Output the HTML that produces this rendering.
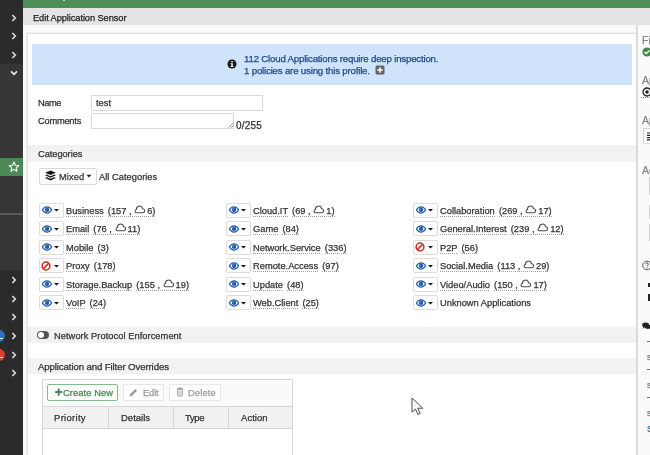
<!DOCTYPE html>
<html><head><meta charset="utf-8"><style>*{box-sizing:border-box;margin:0;padding:0}
html,body{width:650px;height:455px;overflow:hidden;background:#fff;position:relative}
body{font-family:"Liberation Sans",sans-serif;font-size:9.3px;color:#333}
.t{-webkit-text-stroke:0.25px currentColor;will-change:transform}
.a{position:absolute}
svg.a{display:block}
.t{position:absolute;white-space:nowrap;line-height:12px}
.ct{font-size:9.3px;color:#333}
.u{background-image:linear-gradient(to right,#a0a0a0 50%,rgba(255,255,255,0) 50%);background-size:2px 1px;background-repeat:repeat-x;background-position:0 100%;padding-bottom:0.7px}
</style></head><body>
<div class="a" style="left:0;top:0;width:23px;height:455px;background:#2b2b2b"></div>
<div class="a" style="left:0;top:64px;width:23px;height:206px;background:#363636"></div>
<div class="a" style="left:0;top:158px;width:23px;height:18px;background:#4c8a55"></div>
<div class="a" style="left:0;top:213px;width:23px;height:2px;background:#5a5a5a"></div>
<svg class="a" style="left:10px;top:12.600000000000001px" width="8" height="10" viewBox="0 0 8 10"><path d="M2.3 2 L5.3 5 L2.3 8" fill="none" stroke="#d8d8d8" stroke-width="1.7" stroke-linecap="butt" stroke-linejoin="miter"/></svg>
<svg class="a" style="left:10px;top:31px" width="8" height="10" viewBox="0 0 8 10"><path d="M2.3 2 L5.3 5 L2.3 8" fill="none" stroke="#d8d8d8" stroke-width="1.7" stroke-linecap="butt" stroke-linejoin="miter"/></svg>
<svg class="a" style="left:10px;top:49.5px" width="8" height="10" viewBox="0 0 8 10"><path d="M2.3 2 L5.3 5 L2.3 8" fill="none" stroke="#d8d8d8" stroke-width="1.7" stroke-linecap="butt" stroke-linejoin="miter"/></svg>
<svg class="a" style="left:9px;top:69px" width="10" height="8" viewBox="0 0 10 8"><path d="M2 2.3 L5 5.3 L8 2.3" fill="none" stroke="#e8e8e8" stroke-width="1.7" stroke-linecap="butt" stroke-linejoin="miter"/></svg>
<svg class="a" style="left:8px;top:161px" width="12" height="12" viewBox="0 0 12 12"><path d="M6 1 L7.4 4.2 L10.8 4.5 L8.2 6.8 L9 10.2 L6 8.4 L3 10.2 L3.8 6.8 L1.2 4.5 L4.6 4.2 Z" fill="none" stroke="#fff" stroke-width="1.1" stroke-linejoin="round"/></svg>
<svg class="a" style="left:10px;top:275px" width="8" height="10" viewBox="0 0 8 10"><path d="M2.3 2 L5.3 5 L2.3 8" fill="none" stroke="#d8d8d8" stroke-width="1.7" stroke-linecap="butt" stroke-linejoin="miter"/></svg>
<svg class="a" style="left:10px;top:293.5px" width="8" height="10" viewBox="0 0 8 10"><path d="M2.3 2 L5.3 5 L2.3 8" fill="none" stroke="#d8d8d8" stroke-width="1.7" stroke-linecap="butt" stroke-linejoin="miter"/></svg>
<svg class="a" style="left:10px;top:312px" width="8" height="10" viewBox="0 0 8 10"><path d="M2.3 2 L5.3 5 L2.3 8" fill="none" stroke="#d8d8d8" stroke-width="1.7" stroke-linecap="butt" stroke-linejoin="miter"/></svg>
<svg class="a" style="left:10px;top:330.5px" width="8" height="10" viewBox="0 0 8 10"><path d="M2.3 2 L5.3 5 L2.3 8" fill="none" stroke="#d8d8d8" stroke-width="1.7" stroke-linecap="butt" stroke-linejoin="miter"/></svg>
<svg class="a" style="left:10px;top:349.5px" width="8" height="10" viewBox="0 0 8 10"><path d="M2.3 2 L5.3 5 L2.3 8" fill="none" stroke="#d8d8d8" stroke-width="1.7" stroke-linecap="butt" stroke-linejoin="miter"/></svg>
<svg class="a" style="left:10px;top:368px" width="8" height="10" viewBox="0 0 8 10"><path d="M2.3 2 L5.3 5 L2.3 8" fill="none" stroke="#d8d8d8" stroke-width="1.7" stroke-linecap="butt" stroke-linejoin="miter"/></svg>
<div class="a" style="left:-7px;top:329.8px;width:12px;height:12px;border-radius:50%;background:#3071b9"></div>
<div class="a" style="left:-7px;top:348.7px;width:12px;height:12px;border-radius:50%;background:#d8432f"></div>
<div class="a" style="left:0px;top:337.8px;width:2.5px;height:1.2px;background:#eee"></div>
<div class="a" style="left:0px;top:357px;width:2.5px;height:1.2px;background:#eee"></div>
<div class="a" style="left:23px;top:0;width:627px;height:8px;background:#4e8e58"></div>
<div class="a" style="left:63px;top:0;width:1.5px;height:1px;background:#c8dccb"></div>
<div class="a" style="left:23px;top:8px;width:627px;height:17px;background:#e4e4e4"></div>
<div class="a" style="left:23px;top:25px;width:614px;height:430px;background:#f9f9f9"></div>
<div class="a" style="left:27px;top:33px;width:610px;height:430px;background:#fff;border:1px solid #e2e2e2;box-shadow:0 0 2px rgba(0,0,0,.12)"></div>
<div class="a" style="left:637px;top:25px;width:13px;height:430px;background:#fafafa"></div>
<div class="a" style="left:636px;top:25px;width:2px;height:430px;background:#dcdcdc"></div>
<div class="a" style="left:32px;top:44px;width:600px;height:41px;background:#cfe3fb"></div>
<svg class="a" style="left:227px;top:59px" width="10" height="10" viewBox="0 0 10 10"><circle cx="5" cy="5" r="4.5" fill="#1a1a1a"/><rect x="4.3" y="2" width="1.5" height="1.4" fill="#fff"/><path d="M3.6 4.2 H5.8 V7.2 H6.5 V8 H3.6 V7.2 H4.3 V5 H3.6 Z" fill="#fff"/></svg>
<svg class="a" style="left:374.5px;top:65px" width="10" height="10" viewBox="0 0 10 10"><rect x="0.5" y="0.5" width="9" height="9" rx="1.5" fill="#646464"/><path d="M5 2.3 V7.7 M2.3 5 H7.7" stroke="#fff" stroke-width="1.5"/></svg>
<div class="a" style="left:91px;top:95px;width:171.5px;height:16px;border:1px solid #d9d9d9;background:#fff"></div>
<div class="a" style="left:91px;top:113px;width:143px;height:16px;border:1px solid #d9d9d9;background:#fff"></div>
<svg class="a" style="left:227.5px;top:122px" width="6" height="6" viewBox="0 0 6 6"><path d="M5.8 0.5 L0.5 5.8 M5.8 3.2 L3.2 5.8" stroke="#777" stroke-width="0.8"/></svg>
<div class="a" style="left:28px;top:145px;width:608px;height:17px;background:#f2f2f2"></div>
<div class="a" style="left:39px;top:168px;width:58px;height:17px;border:1px solid #d9d9d9;border-radius:2px;background:#fff"></div>
<svg class="a" style="left:44.5px;top:170px" width="11" height="11" viewBox="0 0 11 11"><path d="M0.1 2.7 L5.5 0.6 L10.9 2.7 L5.5 4.9 Z" fill="#151515"/><path d="M0.1 5.3 L1.7 4.6 L5.5 6.2 L9.3 4.6 L10.9 5.3 L5.5 7.7 Z" fill="#151515"/><path d="M0.1 7.9 L1.7 7.2 L5.5 8.8 L9.3 7.2 L10.9 7.9 L5.5 10.4 Z" fill="#151515"/></svg>
<svg class="a" style="left:86px;top:174px" width="6" height="4" viewBox="0 0 6 4"><path d="M0.5 0.8 H5.5 L3 3.5 Z" fill="#222"/></svg>
<div class="a" style="left:39.0px;top:202.7px;width:24.5px;height:15px;border:1px solid #dcdcdc;border-radius:2px;background:#fff"></div>
<svg class="a" style="left:40.8px;top:206.3px" width="12" height="8" viewBox="0 0 12 8"><path d="M0.7 4 C2.3 1.3 4.1 0.3 6 0.3 C7.9 0.3 9.7 1.3 11.3 4 C9.7 6.7 7.9 7.7 6 7.7 C4.1 7.7 2.3 6.7 0.7 4 Z" fill="#1f58a3"/><path d="M2.1 4 C3.3 2.3 4.6 1.6 6 1.6 C7.4 1.6 8.7 2.3 9.9 4 C8.7 5.7 7.4 6.4 6 6.4 C4.6 6.4 3.3 5.7 2.1 4 Z" fill="#fff"/><circle cx="6" cy="3.8" r="2.2" fill="#1f58a3"/><circle cx="5.1" cy="3" r="0.7" fill="#7a9fd0"/></svg>
<svg class="a" style="left:54.2px;top:209.2px" width="5" height="3" viewBox="0 0 5 3"><path d="M0 0 H5 L2.5 2.6 Z" fill="#111"/></svg>
<div class="a" style="left:39.0px;top:221.2px;width:24.5px;height:15px;border:1px solid #dcdcdc;border-radius:2px;background:#fff"></div>
<svg class="a" style="left:40.8px;top:224.8px" width="12" height="8" viewBox="0 0 12 8"><path d="M0.7 4 C2.3 1.3 4.1 0.3 6 0.3 C7.9 0.3 9.7 1.3 11.3 4 C9.7 6.7 7.9 7.7 6 7.7 C4.1 7.7 2.3 6.7 0.7 4 Z" fill="#1f58a3"/><path d="M2.1 4 C3.3 2.3 4.6 1.6 6 1.6 C7.4 1.6 8.7 2.3 9.9 4 C8.7 5.7 7.4 6.4 6 6.4 C4.6 6.4 3.3 5.7 2.1 4 Z" fill="#fff"/><circle cx="6" cy="3.8" r="2.2" fill="#1f58a3"/><circle cx="5.1" cy="3" r="0.7" fill="#7a9fd0"/></svg>
<svg class="a" style="left:54.2px;top:227.7px" width="5" height="3" viewBox="0 0 5 3"><path d="M0 0 H5 L2.5 2.6 Z" fill="#111"/></svg>
<div class="a" style="left:39.0px;top:239.7px;width:24.5px;height:15px;border:1px solid #dcdcdc;border-radius:2px;background:#fff"></div>
<svg class="a" style="left:40.8px;top:243.3px" width="12" height="8" viewBox="0 0 12 8"><path d="M0.7 4 C2.3 1.3 4.1 0.3 6 0.3 C7.9 0.3 9.7 1.3 11.3 4 C9.7 6.7 7.9 7.7 6 7.7 C4.1 7.7 2.3 6.7 0.7 4 Z" fill="#1f58a3"/><path d="M2.1 4 C3.3 2.3 4.6 1.6 6 1.6 C7.4 1.6 8.7 2.3 9.9 4 C8.7 5.7 7.4 6.4 6 6.4 C4.6 6.4 3.3 5.7 2.1 4 Z" fill="#fff"/><circle cx="6" cy="3.8" r="2.2" fill="#1f58a3"/><circle cx="5.1" cy="3" r="0.7" fill="#7a9fd0"/></svg>
<svg class="a" style="left:54.2px;top:246.2px" width="5" height="3" viewBox="0 0 5 3"><path d="M0 0 H5 L2.5 2.6 Z" fill="#111"/></svg>
<div class="a" style="left:39.0px;top:258.2px;width:24.5px;height:15px;border:1px solid #dcdcdc;border-radius:2px;background:#fff"></div>
<svg class="a" style="left:41.0px;top:260.7px" width="10" height="10" viewBox="0 0 10 10"><circle cx="5" cy="5" r="3.9" fill="none" stroke="#d0281c" stroke-width="1.5"/><path d="M2.4 7.6 L7.6 2.4" stroke="#d0281c" stroke-width="1.5"/></svg>
<svg class="a" style="left:54.2px;top:264.7px" width="5" height="3" viewBox="0 0 5 3"><path d="M0 0 H5 L2.5 2.6 Z" fill="#111"/></svg>
<div class="a" style="left:39.0px;top:276.7px;width:24.5px;height:15px;border:1px solid #dcdcdc;border-radius:2px;background:#fff"></div>
<svg class="a" style="left:40.8px;top:280.3px" width="12" height="8" viewBox="0 0 12 8"><path d="M0.7 4 C2.3 1.3 4.1 0.3 6 0.3 C7.9 0.3 9.7 1.3 11.3 4 C9.7 6.7 7.9 7.7 6 7.7 C4.1 7.7 2.3 6.7 0.7 4 Z" fill="#1f58a3"/><path d="M2.1 4 C3.3 2.3 4.6 1.6 6 1.6 C7.4 1.6 8.7 2.3 9.9 4 C8.7 5.7 7.4 6.4 6 6.4 C4.6 6.4 3.3 5.7 2.1 4 Z" fill="#fff"/><circle cx="6" cy="3.8" r="2.2" fill="#1f58a3"/><circle cx="5.1" cy="3" r="0.7" fill="#7a9fd0"/></svg>
<svg class="a" style="left:54.2px;top:283.2px" width="5" height="3" viewBox="0 0 5 3"><path d="M0 0 H5 L2.5 2.6 Z" fill="#111"/></svg>
<div class="a" style="left:39.0px;top:295.2px;width:24.5px;height:15px;border:1px solid #dcdcdc;border-radius:2px;background:#fff"></div>
<svg class="a" style="left:40.8px;top:298.8px" width="12" height="8" viewBox="0 0 12 8"><path d="M0.7 4 C2.3 1.3 4.1 0.3 6 0.3 C7.9 0.3 9.7 1.3 11.3 4 C9.7 6.7 7.9 7.7 6 7.7 C4.1 7.7 2.3 6.7 0.7 4 Z" fill="#1f58a3"/><path d="M2.1 4 C3.3 2.3 4.6 1.6 6 1.6 C7.4 1.6 8.7 2.3 9.9 4 C8.7 5.7 7.4 6.4 6 6.4 C4.6 6.4 3.3 5.7 2.1 4 Z" fill="#fff"/><circle cx="6" cy="3.8" r="2.2" fill="#1f58a3"/><circle cx="5.1" cy="3" r="0.7" fill="#7a9fd0"/></svg>
<svg class="a" style="left:54.2px;top:301.7px" width="5" height="3" viewBox="0 0 5 3"><path d="M0 0 H5 L2.5 2.6 Z" fill="#111"/></svg>
<div class="a" style="left:226.0px;top:202.7px;width:24.5px;height:15px;border:1px solid #dcdcdc;border-radius:2px;background:#fff"></div>
<svg class="a" style="left:227.8px;top:206.3px" width="12" height="8" viewBox="0 0 12 8"><path d="M0.7 4 C2.3 1.3 4.1 0.3 6 0.3 C7.9 0.3 9.7 1.3 11.3 4 C9.7 6.7 7.9 7.7 6 7.7 C4.1 7.7 2.3 6.7 0.7 4 Z" fill="#1f58a3"/><path d="M2.1 4 C3.3 2.3 4.6 1.6 6 1.6 C7.4 1.6 8.7 2.3 9.9 4 C8.7 5.7 7.4 6.4 6 6.4 C4.6 6.4 3.3 5.7 2.1 4 Z" fill="#fff"/><circle cx="6" cy="3.8" r="2.2" fill="#1f58a3"/><circle cx="5.1" cy="3" r="0.7" fill="#7a9fd0"/></svg>
<svg class="a" style="left:241.2px;top:209.2px" width="5" height="3" viewBox="0 0 5 3"><path d="M0 0 H5 L2.5 2.6 Z" fill="#111"/></svg>
<div class="a" style="left:226.0px;top:221.2px;width:24.5px;height:15px;border:1px solid #dcdcdc;border-radius:2px;background:#fff"></div>
<svg class="a" style="left:227.8px;top:224.8px" width="12" height="8" viewBox="0 0 12 8"><path d="M0.7 4 C2.3 1.3 4.1 0.3 6 0.3 C7.9 0.3 9.7 1.3 11.3 4 C9.7 6.7 7.9 7.7 6 7.7 C4.1 7.7 2.3 6.7 0.7 4 Z" fill="#1f58a3"/><path d="M2.1 4 C3.3 2.3 4.6 1.6 6 1.6 C7.4 1.6 8.7 2.3 9.9 4 C8.7 5.7 7.4 6.4 6 6.4 C4.6 6.4 3.3 5.7 2.1 4 Z" fill="#fff"/><circle cx="6" cy="3.8" r="2.2" fill="#1f58a3"/><circle cx="5.1" cy="3" r="0.7" fill="#7a9fd0"/></svg>
<svg class="a" style="left:241.2px;top:227.7px" width="5" height="3" viewBox="0 0 5 3"><path d="M0 0 H5 L2.5 2.6 Z" fill="#111"/></svg>
<div class="a" style="left:226.0px;top:239.7px;width:24.5px;height:15px;border:1px solid #dcdcdc;border-radius:2px;background:#fff"></div>
<svg class="a" style="left:227.8px;top:243.3px" width="12" height="8" viewBox="0 0 12 8"><path d="M0.7 4 C2.3 1.3 4.1 0.3 6 0.3 C7.9 0.3 9.7 1.3 11.3 4 C9.7 6.7 7.9 7.7 6 7.7 C4.1 7.7 2.3 6.7 0.7 4 Z" fill="#1f58a3"/><path d="M2.1 4 C3.3 2.3 4.6 1.6 6 1.6 C7.4 1.6 8.7 2.3 9.9 4 C8.7 5.7 7.4 6.4 6 6.4 C4.6 6.4 3.3 5.7 2.1 4 Z" fill="#fff"/><circle cx="6" cy="3.8" r="2.2" fill="#1f58a3"/><circle cx="5.1" cy="3" r="0.7" fill="#7a9fd0"/></svg>
<svg class="a" style="left:241.2px;top:246.2px" width="5" height="3" viewBox="0 0 5 3"><path d="M0 0 H5 L2.5 2.6 Z" fill="#111"/></svg>
<div class="a" style="left:226.0px;top:258.2px;width:24.5px;height:15px;border:1px solid #dcdcdc;border-radius:2px;background:#fff"></div>
<svg class="a" style="left:227.8px;top:261.8px" width="12" height="8" viewBox="0 0 12 8"><path d="M0.7 4 C2.3 1.3 4.1 0.3 6 0.3 C7.9 0.3 9.7 1.3 11.3 4 C9.7 6.7 7.9 7.7 6 7.7 C4.1 7.7 2.3 6.7 0.7 4 Z" fill="#1f58a3"/><path d="M2.1 4 C3.3 2.3 4.6 1.6 6 1.6 C7.4 1.6 8.7 2.3 9.9 4 C8.7 5.7 7.4 6.4 6 6.4 C4.6 6.4 3.3 5.7 2.1 4 Z" fill="#fff"/><circle cx="6" cy="3.8" r="2.2" fill="#1f58a3"/><circle cx="5.1" cy="3" r="0.7" fill="#7a9fd0"/></svg>
<svg class="a" style="left:241.2px;top:264.7px" width="5" height="3" viewBox="0 0 5 3"><path d="M0 0 H5 L2.5 2.6 Z" fill="#111"/></svg>
<div class="a" style="left:226.0px;top:276.7px;width:24.5px;height:15px;border:1px solid #dcdcdc;border-radius:2px;background:#fff"></div>
<svg class="a" style="left:227.8px;top:280.3px" width="12" height="8" viewBox="0 0 12 8"><path d="M0.7 4 C2.3 1.3 4.1 0.3 6 0.3 C7.9 0.3 9.7 1.3 11.3 4 C9.7 6.7 7.9 7.7 6 7.7 C4.1 7.7 2.3 6.7 0.7 4 Z" fill="#1f58a3"/><path d="M2.1 4 C3.3 2.3 4.6 1.6 6 1.6 C7.4 1.6 8.7 2.3 9.9 4 C8.7 5.7 7.4 6.4 6 6.4 C4.6 6.4 3.3 5.7 2.1 4 Z" fill="#fff"/><circle cx="6" cy="3.8" r="2.2" fill="#1f58a3"/><circle cx="5.1" cy="3" r="0.7" fill="#7a9fd0"/></svg>
<svg class="a" style="left:241.2px;top:283.2px" width="5" height="3" viewBox="0 0 5 3"><path d="M0 0 H5 L2.5 2.6 Z" fill="#111"/></svg>
<div class="a" style="left:226.0px;top:295.2px;width:24.5px;height:15px;border:1px solid #dcdcdc;border-radius:2px;background:#fff"></div>
<svg class="a" style="left:227.8px;top:298.8px" width="12" height="8" viewBox="0 0 12 8"><path d="M0.7 4 C2.3 1.3 4.1 0.3 6 0.3 C7.9 0.3 9.7 1.3 11.3 4 C9.7 6.7 7.9 7.7 6 7.7 C4.1 7.7 2.3 6.7 0.7 4 Z" fill="#1f58a3"/><path d="M2.1 4 C3.3 2.3 4.6 1.6 6 1.6 C7.4 1.6 8.7 2.3 9.9 4 C8.7 5.7 7.4 6.4 6 6.4 C4.6 6.4 3.3 5.7 2.1 4 Z" fill="#fff"/><circle cx="6" cy="3.8" r="2.2" fill="#1f58a3"/><circle cx="5.1" cy="3" r="0.7" fill="#7a9fd0"/></svg>
<svg class="a" style="left:241.2px;top:301.7px" width="5" height="3" viewBox="0 0 5 3"><path d="M0 0 H5 L2.5 2.6 Z" fill="#111"/></svg>
<div class="a" style="left:413.0px;top:202.7px;width:24.5px;height:15px;border:1px solid #dcdcdc;border-radius:2px;background:#fff"></div>
<svg class="a" style="left:414.8px;top:206.3px" width="12" height="8" viewBox="0 0 12 8"><path d="M0.7 4 C2.3 1.3 4.1 0.3 6 0.3 C7.9 0.3 9.7 1.3 11.3 4 C9.7 6.7 7.9 7.7 6 7.7 C4.1 7.7 2.3 6.7 0.7 4 Z" fill="#1f58a3"/><path d="M2.1 4 C3.3 2.3 4.6 1.6 6 1.6 C7.4 1.6 8.7 2.3 9.9 4 C8.7 5.7 7.4 6.4 6 6.4 C4.6 6.4 3.3 5.7 2.1 4 Z" fill="#fff"/><circle cx="6" cy="3.8" r="2.2" fill="#1f58a3"/><circle cx="5.1" cy="3" r="0.7" fill="#7a9fd0"/></svg>
<svg class="a" style="left:428.2px;top:209.2px" width="5" height="3" viewBox="0 0 5 3"><path d="M0 0 H5 L2.5 2.6 Z" fill="#111"/></svg>
<div class="a" style="left:413.0px;top:221.2px;width:24.5px;height:15px;border:1px solid #dcdcdc;border-radius:2px;background:#fff"></div>
<svg class="a" style="left:414.8px;top:224.8px" width="12" height="8" viewBox="0 0 12 8"><path d="M0.7 4 C2.3 1.3 4.1 0.3 6 0.3 C7.9 0.3 9.7 1.3 11.3 4 C9.7 6.7 7.9 7.7 6 7.7 C4.1 7.7 2.3 6.7 0.7 4 Z" fill="#1f58a3"/><path d="M2.1 4 C3.3 2.3 4.6 1.6 6 1.6 C7.4 1.6 8.7 2.3 9.9 4 C8.7 5.7 7.4 6.4 6 6.4 C4.6 6.4 3.3 5.7 2.1 4 Z" fill="#fff"/><circle cx="6" cy="3.8" r="2.2" fill="#1f58a3"/><circle cx="5.1" cy="3" r="0.7" fill="#7a9fd0"/></svg>
<svg class="a" style="left:428.2px;top:227.7px" width="5" height="3" viewBox="0 0 5 3"><path d="M0 0 H5 L2.5 2.6 Z" fill="#111"/></svg>
<div class="a" style="left:413.0px;top:239.7px;width:24.5px;height:15px;border:1px solid #dcdcdc;border-radius:2px;background:#fff"></div>
<svg class="a" style="left:415.0px;top:242.2px" width="10" height="10" viewBox="0 0 10 10"><circle cx="5" cy="5" r="3.9" fill="none" stroke="#d0281c" stroke-width="1.5"/><path d="M2.4 7.6 L7.6 2.4" stroke="#d0281c" stroke-width="1.5"/></svg>
<svg class="a" style="left:428.2px;top:246.2px" width="5" height="3" viewBox="0 0 5 3"><path d="M0 0 H5 L2.5 2.6 Z" fill="#111"/></svg>
<div class="a" style="left:413.0px;top:258.2px;width:24.5px;height:15px;border:1px solid #dcdcdc;border-radius:2px;background:#fff"></div>
<svg class="a" style="left:414.8px;top:261.8px" width="12" height="8" viewBox="0 0 12 8"><path d="M0.7 4 C2.3 1.3 4.1 0.3 6 0.3 C7.9 0.3 9.7 1.3 11.3 4 C9.7 6.7 7.9 7.7 6 7.7 C4.1 7.7 2.3 6.7 0.7 4 Z" fill="#1f58a3"/><path d="M2.1 4 C3.3 2.3 4.6 1.6 6 1.6 C7.4 1.6 8.7 2.3 9.9 4 C8.7 5.7 7.4 6.4 6 6.4 C4.6 6.4 3.3 5.7 2.1 4 Z" fill="#fff"/><circle cx="6" cy="3.8" r="2.2" fill="#1f58a3"/><circle cx="5.1" cy="3" r="0.7" fill="#7a9fd0"/></svg>
<svg class="a" style="left:428.2px;top:264.7px" width="5" height="3" viewBox="0 0 5 3"><path d="M0 0 H5 L2.5 2.6 Z" fill="#111"/></svg>
<div class="a" style="left:413.0px;top:276.7px;width:24.5px;height:15px;border:1px solid #dcdcdc;border-radius:2px;background:#fff"></div>
<svg class="a" style="left:414.8px;top:280.3px" width="12" height="8" viewBox="0 0 12 8"><path d="M0.7 4 C2.3 1.3 4.1 0.3 6 0.3 C7.9 0.3 9.7 1.3 11.3 4 C9.7 6.7 7.9 7.7 6 7.7 C4.1 7.7 2.3 6.7 0.7 4 Z" fill="#1f58a3"/><path d="M2.1 4 C3.3 2.3 4.6 1.6 6 1.6 C7.4 1.6 8.7 2.3 9.9 4 C8.7 5.7 7.4 6.4 6 6.4 C4.6 6.4 3.3 5.7 2.1 4 Z" fill="#fff"/><circle cx="6" cy="3.8" r="2.2" fill="#1f58a3"/><circle cx="5.1" cy="3" r="0.7" fill="#7a9fd0"/></svg>
<svg class="a" style="left:428.2px;top:283.2px" width="5" height="3" viewBox="0 0 5 3"><path d="M0 0 H5 L2.5 2.6 Z" fill="#111"/></svg>
<div class="a" style="left:413.0px;top:295.2px;width:24.5px;height:15px;border:1px solid #dcdcdc;border-radius:2px;background:#fff"></div>
<svg class="a" style="left:414.8px;top:298.8px" width="12" height="8" viewBox="0 0 12 8"><path d="M0.7 4 C2.3 1.3 4.1 0.3 6 0.3 C7.9 0.3 9.7 1.3 11.3 4 C9.7 6.7 7.9 7.7 6 7.7 C4.1 7.7 2.3 6.7 0.7 4 Z" fill="#1f58a3"/><path d="M2.1 4 C3.3 2.3 4.6 1.6 6 1.6 C7.4 1.6 8.7 2.3 9.9 4 C8.7 5.7 7.4 6.4 6 6.4 C4.6 6.4 3.3 5.7 2.1 4 Z" fill="#fff"/><circle cx="6" cy="3.8" r="2.2" fill="#1f58a3"/><circle cx="5.1" cy="3" r="0.7" fill="#7a9fd0"/></svg>
<svg class="a" style="left:428.2px;top:301.7px" width="5" height="3" viewBox="0 0 5 3"><path d="M0 0 H5 L2.5 2.6 Z" fill="#111"/></svg>
<div class="t ct" style="left:66.4px;top:204.8px"><span class="u">Business</span> <span class="u" style="margin-left:1.5px">(157 , <svg style="display:inline-block;vertical-align:0.5px;margin:0" width="11" height="8.5" viewBox="0 0 11 8.5"><path d="M2.1 7.7 H8.7 A2 2 0 0 0 8.5 3.7 A3 3 0 0 0 2.5 4.6 A1.6 1.6 0 0 0 2.1 7.7 Z" fill="none" stroke="#4a4a4a" stroke-width="1.05"/></svg><span style="margin-left:2px">6</span>)</span></div>
<div class="t ct" style="left:66.4px;top:223.3px"><span class="u">Email</span> <span class="u" style="margin-left:1.5px">(76 , <svg style="display:inline-block;vertical-align:0.5px;margin:0" width="11" height="8.5" viewBox="0 0 11 8.5"><path d="M2.1 7.7 H8.7 A2 2 0 0 0 8.5 3.7 A3 3 0 0 0 2.5 4.6 A1.6 1.6 0 0 0 2.1 7.7 Z" fill="none" stroke="#4a4a4a" stroke-width="1.05"/></svg><span style="margin-left:2px">11</span>)</span></div>
<div class="t ct" style="left:66.4px;top:241.8px"><span class="u">Mobile</span> <span class="u" style="margin-left:1.5px">(3)</span></div>
<div class="t ct" style="left:66.4px;top:260.3px"><span class="u">Proxy</span> <span class="u" style="margin-left:1.5px">(178)</span></div>
<div class="t ct" style="left:66.4px;top:278.8px"><span class="u">Storage.Backup</span> <span class="u" style="margin-left:1.5px">(155 , <svg style="display:inline-block;vertical-align:0.5px;margin:0" width="11" height="8.5" viewBox="0 0 11 8.5"><path d="M2.1 7.7 H8.7 A2 2 0 0 0 8.5 3.7 A3 3 0 0 0 2.5 4.6 A1.6 1.6 0 0 0 2.1 7.7 Z" fill="none" stroke="#4a4a4a" stroke-width="1.05"/></svg><span style="margin-left:2px">19</span>)</span></div>
<div class="t ct" style="left:66.4px;top:297.3px"><span class="u">VoIP</span> <span class="u" style="margin-left:1.5px">(24)</span></div>
<div class="t ct" style="left:253.4px;top:204.8px"><span class="u">Cloud.IT</span> <span class="u" style="margin-left:1.5px">(69 , <svg style="display:inline-block;vertical-align:0.5px;margin:0" width="11" height="8.5" viewBox="0 0 11 8.5"><path d="M2.1 7.7 H8.7 A2 2 0 0 0 8.5 3.7 A3 3 0 0 0 2.5 4.6 A1.6 1.6 0 0 0 2.1 7.7 Z" fill="none" stroke="#4a4a4a" stroke-width="1.05"/></svg><span style="margin-left:2px">1</span>)</span></div>
<div class="t ct" style="left:253.4px;top:223.3px"><span class="u">Game</span> <span class="u" style="margin-left:1.5px">(84)</span></div>
<div class="t ct" style="left:253.4px;top:241.8px"><span class="u">Network.Service</span> <span class="u" style="margin-left:1.5px">(336)</span></div>
<div class="t ct" style="left:253.4px;top:260.3px"><span class="u">Remote.Access</span> <span class="u" style="margin-left:1.5px">(97)</span></div>
<div class="t ct" style="left:253.4px;top:278.8px"><span class="u">Update</span> <span class="u" style="margin-left:1.5px">(48)</span></div>
<div class="t ct" style="left:253.4px;top:297.3px"><span class="u">Web.Client</span> <span class="u" style="margin-left:1.5px">(25)</span></div>
<div class="t ct" style="left:440.4px;top:204.8px"><span class="u">Collaboration</span> <span class="u" style="margin-left:1.5px">(269 , <svg style="display:inline-block;vertical-align:0.5px;margin:0" width="11" height="8.5" viewBox="0 0 11 8.5"><path d="M2.1 7.7 H8.7 A2 2 0 0 0 8.5 3.7 A3 3 0 0 0 2.5 4.6 A1.6 1.6 0 0 0 2.1 7.7 Z" fill="none" stroke="#4a4a4a" stroke-width="1.05"/></svg><span style="margin-left:2px">17</span>)</span></div>
<div class="t ct" style="left:440.4px;top:223.3px"><span class="u">General.Interest</span> <span class="u" style="margin-left:1.5px">(239 , <svg style="display:inline-block;vertical-align:0.5px;margin:0" width="11" height="8.5" viewBox="0 0 11 8.5"><path d="M2.1 7.7 H8.7 A2 2 0 0 0 8.5 3.7 A3 3 0 0 0 2.5 4.6 A1.6 1.6 0 0 0 2.1 7.7 Z" fill="none" stroke="#4a4a4a" stroke-width="1.05"/></svg><span style="margin-left:2px">12</span>)</span></div>
<div class="t ct" style="left:440.4px;top:241.8px"><span class="u">P2P</span> <span class="u" style="margin-left:1.5px">(56)</span></div>
<div class="t ct" style="left:440.4px;top:260.3px"><span class="u">Social.Media</span> <span class="u" style="margin-left:1.5px">(113 , <svg style="display:inline-block;vertical-align:0.5px;margin:0" width="11" height="8.5" viewBox="0 0 11 8.5"><path d="M2.1 7.7 H8.7 A2 2 0 0 0 8.5 3.7 A3 3 0 0 0 2.5 4.6 A1.6 1.6 0 0 0 2.1 7.7 Z" fill="none" stroke="#4a4a4a" stroke-width="1.05"/></svg><span style="margin-left:2px">29</span>)</span></div>
<div class="t ct" style="left:440.4px;top:278.8px"><span class="u">Video/Audio</span> <span class="u" style="margin-left:1.5px">(150 , <svg style="display:inline-block;vertical-align:0.5px;margin:0" width="11" height="8.5" viewBox="0 0 11 8.5"><path d="M2.1 7.7 H8.7 A2 2 0 0 0 8.5 3.7 A3 3 0 0 0 2.5 4.6 A1.6 1.6 0 0 0 2.1 7.7 Z" fill="none" stroke="#4a4a4a" stroke-width="1.05"/></svg><span style="margin-left:2px">17</span>)</span></div>
<div class="t ct" style="left:440.4px;top:297.3px"><span>Unknown Applications</span></div>
<div class="a" style="left:28px;top:327px;width:608px;height:16px;background:#f2f2f2"></div>
<div class="a" style="left:36.5px;top:331px;width:12.6px;height:8px;border-radius:4px;background:#555"></div>
<div class="a" style="left:37.5px;top:332px;width:6px;height:6px;border-radius:3px;background:#fff"></div>
<div class="a" style="left:28px;top:357.6px;width:608px;height:16.9px;background:#f2f2f2"></div>
<div class="a" style="left:42px;top:379px;width:251px;height:90px;border:1px solid #d6d6d6;background:#fff"></div>
<div class="a" style="left:43px;top:380px;width:249px;height:26px;background:#fafafa"></div>
<div class="a" style="left:43px;top:406px;width:249px;height:23px;background:#f1f1f1;border-top:1px solid #d6d6d6;border-bottom:1px solid #d6d6d6"></div>
<div class="a" style="left:108.0px;top:406px;width:1px;height:23px;background:#d6d6d6"></div>
<div class="a" style="left:173.0px;top:406px;width:1px;height:23px;background:#d6d6d6"></div>
<div class="a" style="left:228.0px;top:406px;width:1px;height:23px;background:#d6d6d6"></div>
<div class="a" style="left:46.5px;top:384px;width:71.5px;height:17px;border:1px solid #86b98c;border-radius:2px;background:#fff"></div>
<svg class="a" style="left:54.5px;top:388.3px" width="8" height="8" viewBox="0 0 8 8"><path d="M3.7 0.4 V7.8 M0.2 4.1 H7.2" stroke="#3f8b4b" stroke-width="2"/></svg>
<div class="a" style="left:123px;top:384px;width:40.5px;height:17px;border:1px solid #e6e6e6;border-radius:2px;background:#fff"></div>
<svg class="a" style="left:128.5px;top:388px" width="9" height="9" viewBox="0 0 9 9"><path d="M0.6 8.4 L1.1 6.2 L6.3 1 L8 2.7 L2.8 7.9 Z" fill="#999"/></svg>
<div class="a" style="left:169px;top:384px;width:52px;height:17px;border:1px solid #e6e6e6;border-radius:2px;background:#fff"></div>
<svg class="a" style="left:175.5px;top:386.5px" width="8" height="10" viewBox="0 0 8 10"><path d="M0.8 1.8 H7.2 M2.8 1.8 V0.8 H5.2 V1.8" fill="none" stroke="#9a9a9a" stroke-width="0.9"/><path d="M1.5 2.6 H6.5 L6.1 9 H1.9 Z" fill="none" stroke="#9a9a9a" stroke-width="0.9"/><path d="M3 4 V7.8 M5 4 V7.8" stroke="#9a9a9a" stroke-width="0.7"/></svg>
<svg class="a" style="left:411.3px;top:397.2px" width="14" height="20" viewBox="0 0 14 20"><path d="M1 1 V15.2 L4.5 12 L6.9 17.4 L9.1 16.4 L6.8 11.2 H11.8 Z" fill="#fff" stroke="#333" stroke-width="0.9" stroke-linejoin="miter"/></svg>
<svg class="a" style="left:642px;top:47px" width="10" height="10" viewBox="0 0 10 10"><circle cx="5" cy="5" r="4.6" fill="#3d8b47"/><path d="M2.6 5 L4.3 6.6 L7.4 3.4" fill="none" stroke="#fff" stroke-width="1.4"/></svg>
<svg class="a" style="left:642px;top:87px" width="10" height="10" viewBox="0 0 10 10"><circle cx="5" cy="5" r="4" fill="none" stroke="#222" stroke-width="1.3"/><circle cx="5" cy="5" r="1.8" fill="#222"/></svg>
<div class="a" style="left:641px;top:97px;width:9px;height:0;border-top:1px dotted #888"></div>
<div class="a" style="left:643px;top:128px;width:10px;height:16px;border:1px solid #d6d6d6;background:#fff"></div>
<svg class="a" style="left:647px;top:132px" width="4" height="9" viewBox="0 0 4 9"><path d="M0 1 H4 M0 3.3 H4 M0 5.6 H4 M0 7.9 H4" stroke="#222" stroke-width="1.2"/></svg>
<div class="a" style="left:648.5px;top:176.8px;width:1px;height:17.8px;background:#cfcfcf"></div>
<div class="a" style="left:648.5px;top:204.5px;width:1px;height:14.8px;background:#cfcfcf"></div>
<div class="a" style="left:648.5px;top:224.2px;width:1px;height:16.8px;background:#cfcfcf"></div>
<svg class="a" style="left:642px;top:260px" width="10" height="11" viewBox="0 0 10 11"><circle cx="5" cy="5.5" r="4.3" fill="none" stroke="#444" stroke-width="0.9"/><path d="M3.6 4.3 C3.6 3.4 4.3 2.9 5 2.9 C5.8 2.9 6.4 3.5 6.4 4.2 C6.4 5.2 5.1 5.3 5.1 6.4" fill="none" stroke="#444" stroke-width="0.9"/><circle cx="5.1" cy="7.9" r="0.55" fill="#444"/></svg>
<div class="a" style="left:648px;top:283px;width:2px;height:4px;background:#222"></div>
<div class="a" style="left:648px;top:294px;width:2px;height:7px;background:#222"></div>
<svg class="a" style="left:642px;top:322px" width="9" height="8" viewBox="0 0 9 8"><ellipse cx="3.6" cy="3" rx="3.4" ry="2.4" fill="#222"/><ellipse cx="6" cy="4.8" rx="3" ry="2.2" fill="#222"/><path d="M1.5 4.5 L0.8 6.8 L3 5.2 Z" fill="#222"/></svg>
<div class="a" style="left:647px;top:340.5px;width:3px;height:1.2px;background:#4a78b5"></div>
<div class="a" style="left:647px;top:369.0px;width:3px;height:1.2px;background:#4a78b5"></div>
<div class="a" style="left:647px;top:397.3px;width:3px;height:1.2px;background:#4a78b5"></div>
<div class="t" style="left:33px;top:12px;font-size:9.3px;color:#222;letter-spacing:-0.097px;font-weight:normal;">Edit Application Sensor</div>
<div class="t" style="left:243.6px;top:53px;font-size:9.7px;color:#234b86;letter-spacing:-0.206px;font-weight:normal;">112 Cloud Applications require deep inspection.</div>
<div class="t" style="left:243.6px;top:65px;font-size:9.7px;color:#234b86;letter-spacing:-0.196px;font-weight:normal;">1 policies are using this profile.</div>
<div class="t" style="left:38px;top:97px;font-size:9.3px;color:#333;letter-spacing:-0.466px;font-weight:normal;">Name</div>
<div class="t" style="left:96px;top:97px;font-size:9.3px;color:#333;letter-spacing:0.000px;font-weight:normal;">test</div>
<div class="t" style="left:38px;top:115px;font-size:9.3px;color:#333;letter-spacing:-0.235px;font-weight:normal;">Comments</div>
<div class="t" style="left:236.2px;top:120px;font-size:10px;color:#333;letter-spacing:0.169px;font-weight:normal;">0/255</div>
<div class="t" style="left:38px;top:148px;font-size:9.3px;color:#333;letter-spacing:-0.062px;font-weight:normal;">Categories</div>
<div class="t" style="left:59px;top:171px;font-size:9.3px;color:#333;letter-spacing:0.100px;font-weight:normal;">Mixed</div>
<div class="t" style="left:98.5px;top:171px;font-size:9.3px;color:#333;letter-spacing:0.025px;font-weight:normal;">All Categories</div>
<div class="t" style="left:53.6px;top:330px;font-size:9.3px;color:#333;letter-spacing:0.049px;font-weight:normal;">Network Protocol Enforcement</div>
<div class="t" style="left:37.5px;top:361px;font-size:9.7px;color:#333;letter-spacing:-0.134px;font-weight:normal;">Application and Filter Overrides</div>
<div class="t" style="left:53.8px;top:411.7px;font-size:9.5px;color:#333;letter-spacing:0.292px;font-weight:normal;">Priority</div>
<div class="t" style="left:120.5px;top:411.7px;font-size:9.5px;color:#333;letter-spacing:0.010px;font-weight:normal;">Details</div>
<div class="t" style="left:185.4px;top:411.7px;font-size:9.5px;color:#333;letter-spacing:-0.332px;font-weight:normal;">Type</div>
<div class="t" style="left:240.8px;top:411.7px;font-size:9.5px;color:#333;letter-spacing:0.039px;font-weight:normal;">Action</div>
<div class="t" style="left:63px;top:387.3px;font-size:9.3px;color:#3f8b4b;letter-spacing:0.102px;font-weight:normal;">Create New</div>
<div class="t" style="left:142.5px;top:387.3px;font-size:9.3px;color:#9a9a9a;letter-spacing:-0.107px;font-weight:normal;">Edit</div>
<div class="t" style="left:188.4px;top:387.3px;font-size:9.3px;color:#9a9a9a;letter-spacing:0.145px;font-weight:normal;">Delete</div>
<div class="t" style="left:641.8px;top:34px;font-size:10.5px;color:#858585;letter-spacing:0.000px;font-weight:normal;">Fi</div>
<div class="t" style="left:641.8px;top:74px;font-size:10.5px;color:#858585;letter-spacing:0.000px;font-weight:normal;">Ap</div>
<div class="t" style="left:641.8px;top:114px;font-size:10.5px;color:#858585;letter-spacing:0.000px;font-weight:normal;">Ap</div>
<div class="t" style="left:641.8px;top:164px;font-size:10.5px;color:#858585;letter-spacing:0.000px;font-weight:normal;">Ad</div>
<div class="t" style="left:647px;top:350.6px;font-size:9.3px;color:#777;letter-spacing:0.000px;font-weight:normal;">s</div>
<div class="t" style="left:647px;top:379.1px;font-size:9.3px;color:#777;letter-spacing:0.000px;font-weight:normal;">s</div>
<div class="t" style="left:647px;top:407.3px;font-size:9.3px;color:#777;letter-spacing:0.000px;font-weight:normal;">s</div>
<div class="t" style="left:647px;top:423px;font-size:9.3px;color:#2f5f9f;letter-spacing:0.000px;font-weight:normal;">S</div>
</body></html>
